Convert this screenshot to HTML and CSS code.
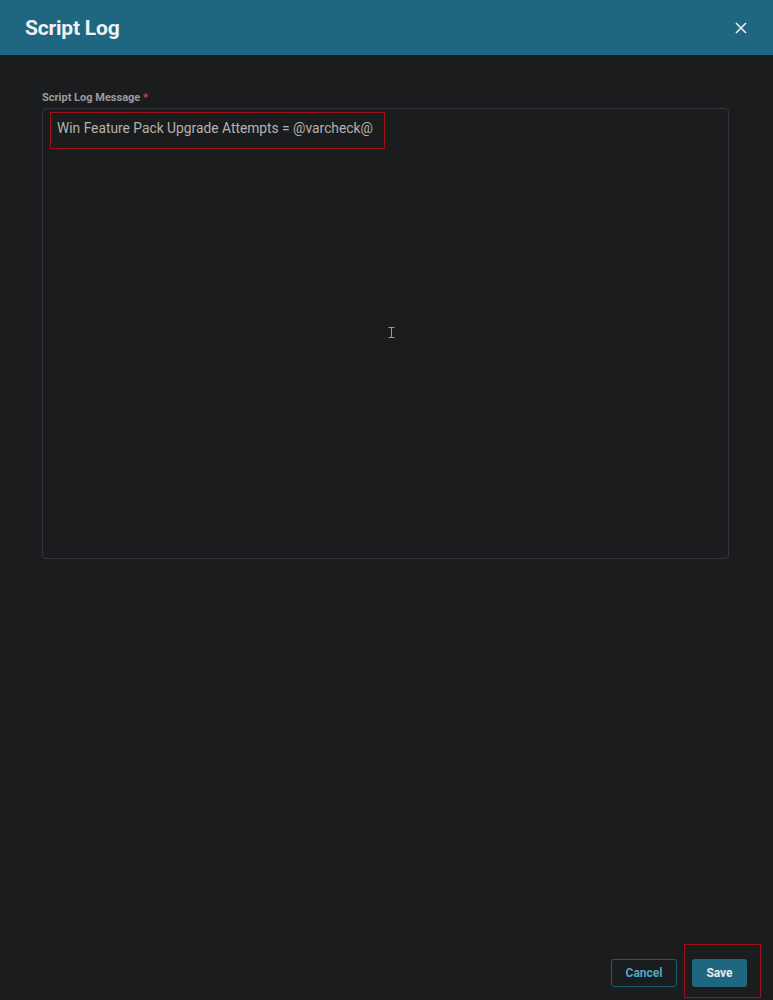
FILE: index.html
```html
<!DOCTYPE html>
<html lang="en">
<head>
  <meta charset="UTF-8">
  <title>Script Log</title>
  <link rel="stylesheet" href="styles.css">
</head>
<body>

<div class="dialog">
  <div class="header">
    <h1>Script Log</h1>
    <button class="close" aria-label="Close">
      <svg width="12" height="12" viewBox="0 0 12 12"><path d="M1 1L11 11M11 1L1 11" stroke="#e8eef1" stroke-width="1.6" fill="none"/></svg>
    </button>
  </div>

  <div class="body">
    <label class="label">Script Log Message <span class="req">*</span></label>
    <div class="textarea">
      <div class="mark">Win Feature Pack Upgrade Attempts = @varcheck@</div>
      <svg class="ibeam" width="7" height="11" viewBox="0 0 7 11"><path d="M0.5 0.5H6.5M0.5 10.5H6.5M3.5 0.5V10.5" stroke="#9a9a9a" stroke-width="1" fill="none"/></svg>
    </div>
  </div>

  <div class="footer">
    <button class="btn cancel">Cancel</button>
    <div class="save-mark"><button class="btn save">Save</button></div>
  </div>
</div>

</body>
</html>
```

FILE: styles.css
```css
* { box-sizing: border-box; }
html, body { height: 100%; }
body {
  margin: 0;
  background: #1b1c1e;
  font-family: Roboto, "Liberation Sans", sans-serif;
  color: #bdbdbd;
}
.dialog {
  height: 1000px;
  display: flex;
  flex-direction: column;
}
.header {
  height: 55px;
  background: #1f6680;
  display: flex;
  align-items: center;
  justify-content: space-between;
  padding: 0 26px 0 25px;
}
.header h1 {
  margin: 0;
  font-size: 21px;
  font-weight: 700;
  color: #eef2f4;
  letter-spacing: -0.2px;
}
.close {
  background: none;
  border: none;
  padding: 0;
  width: 12px;
  height: 12px;
  display: flex;
}
.body {
  flex: 1;
  padding: 36px 44px 0 42px;
}
.label {
  display: block;
  font-size: 11px;
  font-weight: 700;
  color: #9b9b9b;
  margin-bottom: 4px;
  line-height: 13px;
}
.req { color: #d64545; }
.textarea {
  position: relative;
  height: 451px;
  border: 1px solid #34363a;
  border-radius: 4px;
  padding: 3px 7px;
}
.mark {
  width: 335px;
  height: 37px;
  border: 1px solid #9a1118;
  padding: 6px 0 0 6px;
  font-size: 13.8px;
  color: #b4b2ac;
  line-height: 18px;
}
.ibeam {
  position: absolute;
  left: 345px;
  top: 218px;
}
.footer {
  display: flex;
  justify-content: flex-end;
  align-items: flex-end;
  gap: 7px;
  padding: 0 12px 2px 0;
  height: 56px;
}
.cancel { margin-bottom: 11px; }
.save-mark {
  border: 1px solid #9a1118;
  width: 77px;
  height: 54px;
  display: flex;
  align-items: flex-end;
  padding: 0 0 10px 7px;
}
.btn {
  font-family: Roboto, "Liberation Sans", sans-serif;
  font-size: 12px;
  font-weight: 700;
  height: 28px;
  border-radius: 3px;
  cursor: pointer;
}
.cancel {
  width: 66px;
  background: transparent;
  color: #4fa6c4;
  border: 1px solid #1f5b70;
}
.save {
  width: 55px;
  background: #1f6680;
  color: #e6edf0;
  border: none;
}
```
